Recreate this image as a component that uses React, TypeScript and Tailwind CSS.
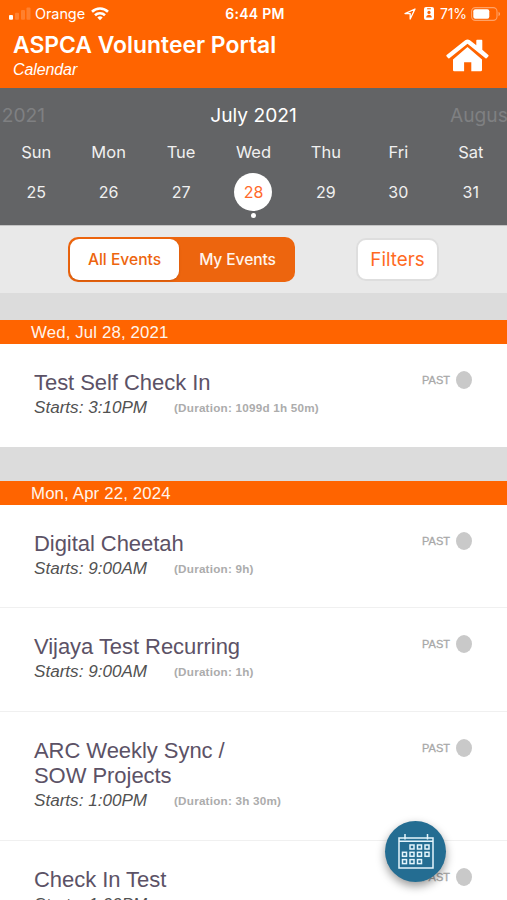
import React from 'react';

interface EventItem {
  lines: string[];
  starts: string;
  duration: string;
}

interface EventGroup {
  date: string;
  events: EventItem[];
}

const days = [
  { name: 'Sun', date: 25 },
  { name: 'Mon', date: 26 },
  { name: 'Tue', date: 27 },
  { name: 'Wed', date: 28, selected: true },
  { name: 'Thu', date: 29 },
  { name: 'Fri', date: 30 },
  { name: 'Sat', date: 31 },
];

const groups: EventGroup[] = [
  {
    date: 'Wed, Jul 28, 2021',
    events: [{ lines: ['Test Self Check In'], starts: '3:10PM', duration: '1099d 1h 50m' }],
  },
  {
    date: 'Mon, Apr 22, 2024',
    events: [
      { lines: ['Digital Cheetah'], starts: '9:00AM', duration: '9h' },
      { lines: ['Vijaya Test Recurring'], starts: '9:00AM', duration: '1h' },
      { lines: ['ARC Weekly Sync /', 'SOW Projects'], starts: '1:00PM', duration: '3h 30m' },
      { lines: ['Check In Test'], starts: '1:00PM', duration: '1h' },
    ],
  },
];

const SignalIcon = () => (
  <svg width="22" height="14" viewBox="0 0 22 14" fill="#fff">
    <rect x="0" y="8" width="4" height="4.7" rx="1" />
    <rect x="6" y="5.7" width="4" height="7" rx="1" opacity="0.18" />
    <rect x="12" y="3" width="4" height="9.7" rx="1" opacity="0.18" />
    <rect x="17.5" y="0.5" width="4" height="12.2" rx="1" opacity="0.18" />
  </svg>
);

const WifiIcon = () => (
  <svg width="18" height="14" viewBox="0 0 18 14" fill="none" stroke="#fff" strokeWidth="2.6">
    <path d="M1 4.8a11.5 11.5 0 0 1 16 0" />
    <path d="M4 8.2a7.2 7.2 0 0 1 10 0" />
    <path d="M9 13.2 6.3 10.5a3.9 3.9 0 0 1 5.4 0z" fill="#fff" stroke="none" />
  </svg>
);

const LocationIcon = () => (
  <svg width="12" height="12" viewBox="0 0 12 12" fill="none" stroke="#fff" strokeWidth="1.3" strokeLinejoin="round">
    <path d="M11 1 1 5.6h5.2V11z" />
  </svg>
);

const BadgeIcon = () => (
  <svg width="10" height="13" viewBox="0 0 10 13">
    <rect width="10" height="13" rx="2" fill="#fff" />
    <rect x="3" y="1.2" width="4" height="1" rx="0.5" fill="#ff6400" />
    <circle cx="5" cy="5.4" r="1.6" fill="#ff6400" />
    <path d="M2.2 10.5c0-3.6 5.6-3.6 5.6 0z" fill="#ff6400" />
  </svg>
);

const BatteryIcon = () => (
  <svg width="30" height="14" viewBox="0 0 30 14">
    <rect x="0.6" y="0.6" width="25.4" height="12.8" rx="3.8" fill="none" stroke="#fff" strokeOpacity="0.4" strokeWidth="1.1" />
    <rect x="2.3" y="2.2" width="16" height="9.6" rx="2" fill="#fff" />
    <path d="M27.6 4.8v4.4c1.8-.7 1.8-3.7 0-4.4z" fill="#fff" fillOpacity="0.5" />
  </svg>
);

const HomeIcon = () => (
  <svg width="43" height="33" viewBox="0 0 43 33" fill="#fff">
    <path d="M21.5 7.9 36 20.5V31a1.3 1.3 0 0 1-1.3 1.3H25.3v-9.1h-7.2v9.1H8.3A1.3 1.3 0 0 1 7 31V20.5z" />
    <path d="M30.3 10.3V1.5c0-.5.3-.7.7-.7h4.6c.4 0 .7.2.7.7v9.2l6 5.2c.5.4.5.9.1 1.4l-1.5 1.8c-.4.5-.9.5-1.4.1L21.5 4.8 3.4 19.2c-.5.4-1 .4-1.4-.1L.5 17.3c-.4-.5-.4-1 .1-1.4L19.2 1.2c1.5-1.1 3.2-1.1 4.7 0l6.4 5z" />
  </svg>
);

const dateCells = [
  [13, 12], [20.5, 12], [28, 12],
  [5.5, 19.3], [13, 19.3], [20.5, 19.3], [28, 19.3],
  [5.5, 26.6], [13, 26.6], [20.5, 26.6],
];

const CalendarIcon = () => (
  <svg width="36" height="37" viewBox="0 0 36 37" fill="none" stroke="#e4f5fc" strokeWidth="1.5">
    <rect x="1" y="5" width="34" height="30" />
    <path d="M1 8.3h34M7 1v5.5M29.5 1v5.5" />
    {dateCells.map(([x, y]) => (
      <rect key={`${x}-${y}`} x={x - 1} y={y} width="4" height="4" />
    ))}
  </svg>
);

const Header = () => (
  <header className="h-[88px] shrink-0 bg-[#ff6400] text-white font-[Inter,sans-serif]">
    <div className="grid h-[27px] grid-cols-3 items-center pl-[9px] pr-[6px]">
      <div className="flex items-center">
        <SignalIcon />
        <span className="ml-1 mr-[6px] text-[14.5px] tracking-[-0.1px]">Orange</span>
        <WifiIcon />
      </div>
      <span className="text-center text-[14px] font-semibold tracking-[0.25px]">6:44 PM</span>
      <div className="flex items-center justify-end">
        <LocationIcon />
        <span className="ml-2 mr-[6px]"><BadgeIcon /></span>
        <span className="mr-[4px] text-[14px] tracking-[-0.1px]">71%</span>
        <BatteryIcon />
      </div>
    </div>
    <div className="flex justify-between pl-[13px] pr-[18px]">
      <div className="pt-[4px]">
        <h1 className="text-[22.9px] leading-[29px] font-semibold whitespace-nowrap">ASPCA Volunteer Portal</h1>
        <p className="text-[16px] leading-[20px] italic tracking-[-0.1px] font-['Liberation_Sans',sans-serif]">Calendar</p>
      </div>
      <div className="pt-[12px]"><HomeIcon /></div>
    </div>
  </header>
);

const WeekStrip = () => (
  <section className="h-[137px] shrink-0 overflow-hidden bg-[#636466] text-[#f0f0f0] font-[Inter,sans-serif]">
    <div className="grid h-[52px] grid-cols-[45px_1fr_57px] pt-[13px] text-[19.2px] leading-7 whitespace-nowrap">
      <span className="flex justify-end text-[#7f8082]">June 2021</span>
      <span className="pl-3 text-center text-white">July 2021</span>
      <span className="text-[#7f8082]">August 2021</span>
    </div>
    <div className="grid grid-cols-7 text-center">
      {days.map((day) => (
        <div key={day.name} className="flex flex-col items-center">
          <span className="h-6 text-[16.5px] leading-6">{day.name}</span>
          <span
            className={
              day.selected
                ? 'mt-[9px] flex size-[38px] items-center justify-center rounded-full bg-white text-[16px] text-[#ff6a2b]'
                : 'mt-[9px] flex size-[38px] items-center justify-center text-[16px]'
            }
          >
            {day.date}
          </span>
          {day.selected && <span className="mt-[2px] size-[5px] rounded-full bg-white" />}
        </div>
      ))}
    </div>
  </section>
);

const Toolbar = () => (
  <section className="flex h-[68px] shrink-0 items-start border-t border-[#c4c4c4] bg-[#e9e9e9] pl-[68px] pt-[11px] font-[Inter,sans-serif]">
    <div className="flex h-[45px] w-[227px] rounded-[10px] bg-[#ed650e] p-[2px] text-[15.6px]">
      <button className="w-[109px] rounded-[9px] bg-white pt-px text-[#ed650e] font-medium shadow-sm">All Events</button>
      <button className="flex-1 pt-px pl-[3px] tracking-[-0.1px] text-[#fff4ec] font-medium">My Events</button>
    </div>
    <button className="ml-[61px] mt-[1px] h-[43px] w-[83px] rounded-[10px] border-2 border-[#dedede] bg-white pt-px text-[18.8px] text-[#ff6a1f]">
      Filters
    </button>
  </section>
);

const EventRow: React.FC<{ event: EventItem }> = ({ event }) => (
  <li className="flex items-start justify-between border-b border-[#f0f0f0] pb-[26px] pl-[34px] pr-[35px] pt-[26px] last:border-b-0 last:pb-[26.5px]">
    <div>
      <h3 className="text-[22px] leading-[25.5px] tracking-[-0.05px] text-[#5c5266]">
        {event.lines.map((line) => (
          <span key={line} className="block whitespace-nowrap">{line}</span>
        ))}
      </h3>
      <div className="flex h-[25px] items-center">
        <span className="w-[140px] text-[17.1px] italic text-[#515151]">Starts: {event.starts}</span>
        <span className="text-[11.7px] font-bold tracking-[0.22px] text-[#acacac]">(Duration: {event.duration})</span>
      </div>
    </div>
    <div className="flex items-center gap-[6px] pt-px">
      <span className="text-[11px] text-[#a8a8a8] [-webkit-text-stroke:0.3px_#a8a8a8]">PAST</span>
      <span className="h-[18px] w-4 rounded-[50%] bg-[#c9c9c9]" />
    </div>
  </li>
);

const App = () => {
  return (
    <div className="relative flex h-[900px] w-full flex-col overflow-hidden bg-white font-['Liberation_Sans',Arial,sans-serif]">
      <Header />
      <WeekStrip />
      <Toolbar />
      <main className="shrink-0">
        {groups.map((group, i) => (
          <section key={group.date}>
            <div className={i === 0 ? 'h-[27px] bg-[#dcdcdc]' : 'h-[33.4px] bg-[#dcdcdc]'} />
            <h2 className="h-[24.2px] bg-[#ff6400] pl-[31px] text-[16.8px] leading-[25px] tracking-[0.15px] text-[#fff4ec]">{group.date}</h2>
            <ul>
              {group.events.map((event) => (
                <EventRow key={event.lines[0]} event={event} />
              ))}
            </ul>
          </section>
        ))}
      </main>
      <button className="absolute left-[385px] top-[821px] flex size-[61px] items-center justify-center rounded-full bg-[#246d92] shadow-[0_4px_10px_rgba(0,0,0,0.4)]">
        <CalendarIcon />
      </button>
    </div>
  );
};

export default App;
